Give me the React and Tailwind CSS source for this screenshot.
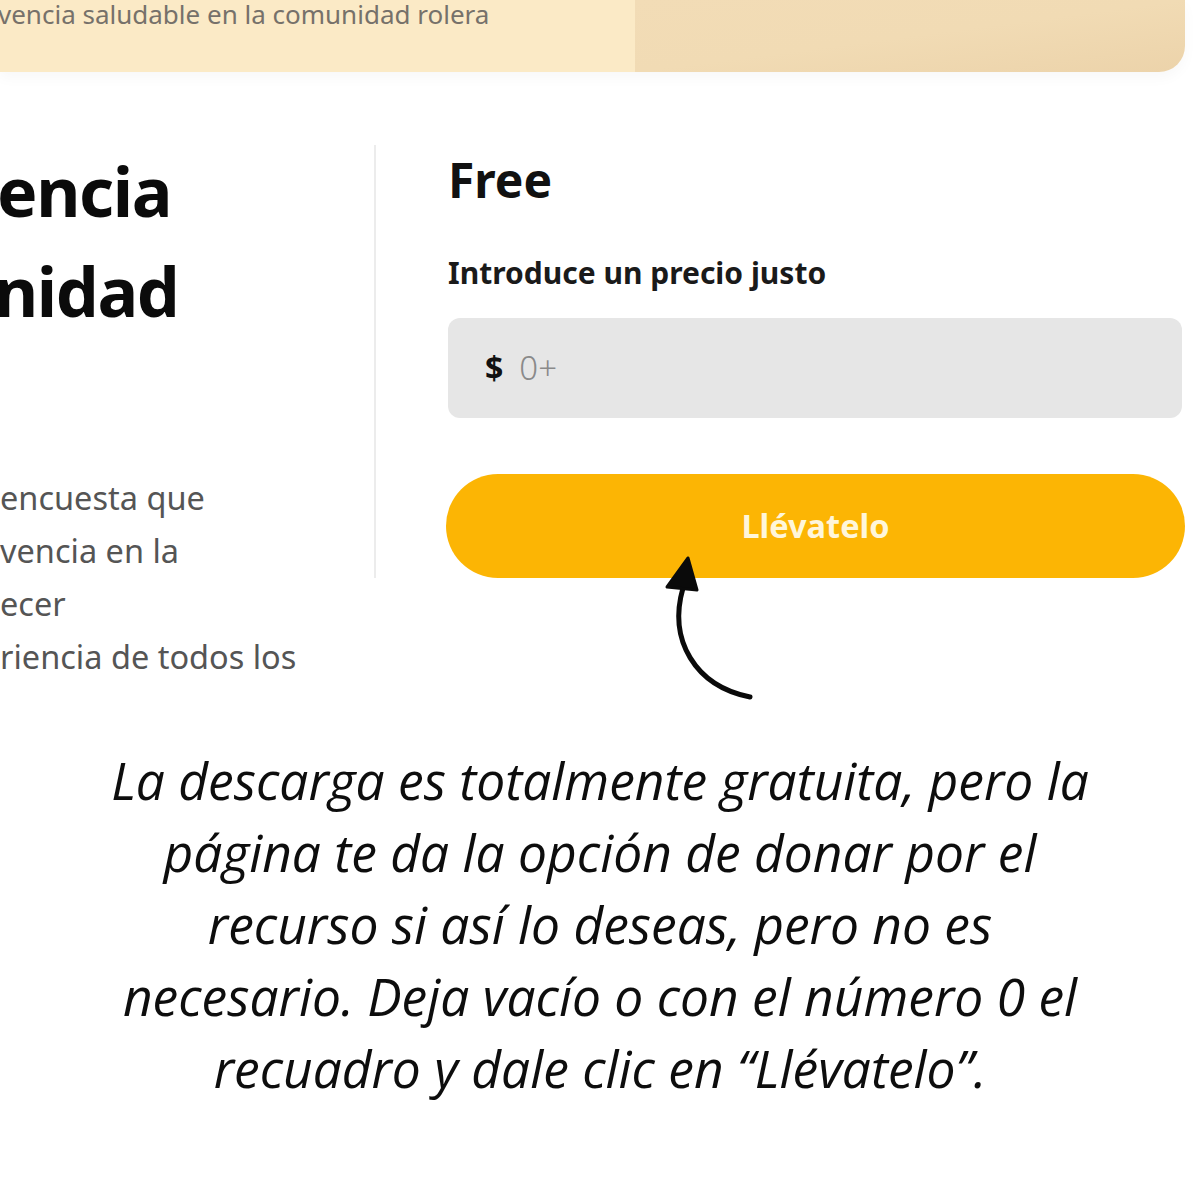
import React from "react";

export default function App() {
  return (
    <div className="relative w-[1200px] h-[1200px] bg-white overflow-hidden" style={{ fontFamily: "'Noto Sans', Lato, sans-serif" }}>
      {/* Top banner */}
      <div className="flex w-[1185px] h-[72px] rounded-br-[26px] overflow-hidden shadow-[0_6px_14px_rgba(0,0,0,0.03)]">
        <div className="w-[635px] h-full bg-[#fbeac6] overflow-hidden">
          <div className="-mt-[4px] -ml-[2px] text-[26px] leading-[36px] text-[#76716a] whitespace-nowrap">vencia saludable en la comunidad rolera</div>
        </div>
        <div className="flex-1 h-full bg-gradient-to-br from-[#f2dcb6] via-[#f1dbb4] to-[#ecd3aa]" />
      </div>

      {/* Main row */}
      <div className="flex items-start mt-[69px]">
        <div className="w-[374px] shrink-0 overflow-hidden">
          <div className="text-[68px] leading-[100px] font-bold tracking-[-0.02em] text-[#0b0b0b] whitespace-nowrap">
            <div className="-ml-[3px]">encia</div>
            <div className="-ml-[6px]">nidad</div>
          </div>
          <div className="mt-[130px] text-[32.5px] leading-[53px] text-[#555555] whitespace-nowrap">
            <div>encuesta que</div>
            <div>vencia en la</div>
            <div>ecer</div>
            <div>riencia de todos los</div>
          </div>
        </div>
        <div className="mt-[4px] flex-1 border-l-2 border-[#ececec] pl-[72px] h-[433px]">
          <div className="mt-[5px] text-[48px] leading-[60px] font-bold text-[#111111]">Free</div>
          <div className="mt-[43px] text-[30px] leading-[40px] font-bold text-[#1a1a1a]">Introduce un precio justo</div>
          <div className="mt-[25px] w-[734px] h-[100px] rounded-[12px] bg-[#e6e6e6] flex items-center pl-[37px] gap-[16px]">
            <span className="text-[32px] font-bold text-[#111111]">$</span>
            <span className="text-[33px] font-light text-[#8a8a8a]">0+</span>
          </div>
          <div className="mt-[56px] -ml-[2px] w-[739px] h-[104px] rounded-full bg-[#fcb504] flex items-center justify-center">
            <span className="text-[32.5px] font-bold text-[#fff6da]">Llévatelo</span>
          </div>
        </div>
      </div>

      {/* Arrow */}
      <svg className="absolute left-0 top-0" width="1200" height="1200" viewBox="0 0 1200 1200" fill="none">
        <path d="M683 588 C 668 640, 695 686, 750 697" stroke="#0a0a0a" strokeWidth="5" strokeLinecap="round" />
        <path d="M688 558 L 667 587 L 697 590 Z" fill="#0a0a0a" stroke="#0a0a0a" strokeWidth="3" strokeLinejoin="round" />
      </svg>

      {/* Caption */}
      <div
        className="absolute left-0 top-[744px] w-[1200px] text-center italic text-[51.5px] leading-[72px] text-[#0d0d0d]"
        style={{ fontFamily: "'Open Sans', 'Noto Sans', sans-serif" }}
      >
        La descarga es totalmente gratuita, pero la
        <br />
        página te da la opción de donar por el
        <br />
        recurso si así lo deseas, pero no es
        <br />
        necesario. Deja vacío o con el número 0 el
        <br />
        recuadro y dale clic en “Llévatelo”.
      </div>
    </div>
  );
}
